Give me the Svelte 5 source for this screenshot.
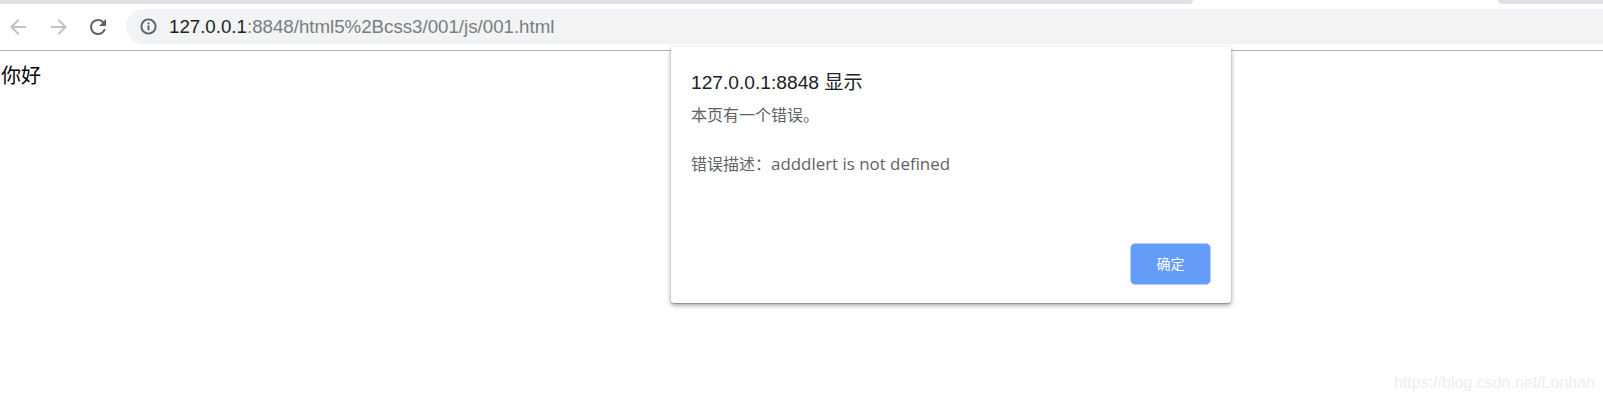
<script>
  const host = '127.0.0.1';
  const rest = ':8848/html5%2Bcss3/001/js/001.html';
</script>

<div class="page">
  <div class="tabstrip">
    <div class="tab-bg left"></div>
    <div class="tab-bg right"></div>
  </div>
  <div class="toolbar">
    <svg class="nav first" width="24" height="24" viewBox="0 0 24 24" aria-hidden="true"><path d="M20 11H7.83l5.59-5.59L12 4l-8 8 8 8 1.41-1.41L7.83 13H20z" fill="#c0c2c5"/></svg>
    <svg class="nav" width="24" height="24" viewBox="0 0 24 24" aria-hidden="true"><path d="M4 11h12.17l-5.59-5.59L12 4l8 8-8 8-1.41-1.41L16.17 13H4z" fill="#c0c2c5"/></svg>
    <svg class="nav reload" width="24" height="24" viewBox="0 0 24 24" aria-hidden="true"><path d="M17.65 6.35A7.96 7.96 0 0 0 12 4a8 8 0 1 0 7.73 10h-2.08A6 6 0 1 1 12 6c1.66 0 3.14.69 4.22 1.78L13 11h7V4z" fill="#5f6368"/></svg>
    <div class="omnibox">
      <svg width="17" height="17" viewBox="0 0 16 16" aria-hidden="true"><circle cx="8" cy="8" r="6.7" fill="none" stroke="#5f6368" stroke-width="1.8"/><rect x="7.1" y="7" width="1.8" height="4.6" fill="#5f6368"/><rect x="7.1" y="4.2" width="1.8" height="1.8" fill="#5f6368"/></svg>
      <span class="url"><span class="host">{host}</span>{rest}</span>
    </div>
  </div>
  <main class="content">你好</main>

  <div class="dialog" role="alertdialog">
    <h2>127.0.0.1:8848 显示</h2>
    <p class="first-line">本页有一个错误。</p>
    <p class="second-line">错误描述：<span class="latin">adddlert is not defined</span></p>
    <div class="actions"><button>确定</button></div>
  </div>

  <div class="watermark">https://blog.csdn.net/Lonhan</div>
</div>

<style>
  :global(body) { margin: 0; background: #fff; }
  .page {
    position: relative;
    width: 1603px;
    height: 401px;
    overflow: hidden;
    font-family: "Open Sans", "Noto Sans CJK SC", sans-serif;
    background: #fff;
  }
  .tabstrip { display: flex; justify-content: space-between; height: 4px; background: #fff; }
  .tab-bg { height: 4px; background: #dee1e6; }
  .tab-bg.left { width: 1193px; border-bottom-right-radius: 4px; }
  .tab-bg.right { width: 105px; border-bottom-left-radius: 4px; }
  .toolbar {
    display: flex;
    align-items: center;
    height: 47px;
    box-sizing: border-box;
    padding-bottom: 1px;
    border-bottom: 1px solid #b2b2b2;
  }
  .nav { flex: none; margin-left: 17px; }
  .nav.first { margin-left: 6px; }
  .nav.reload { margin-left: 15px; }
  .omnibox {
    display: flex;
    align-items: center;
    gap: 12px;
    flex: 1;
    height: 35px;
    margin-left: 16px;
    padding-left: 14px;
    background: #f1f3f4;
    border-radius: 18px 0 0 18px;
  }
  .url { font-family: "Liberation Sans", sans-serif; font-size: 18.7px; color: #7a7d81; white-space: nowrap; }
  .host { color: #202124; }
  .content { padding: 12px 0 0 1px; font-size: 20px; line-height: 26px; color: #000; }
  .dialog {
    position: absolute;
    left: 671px;
    top: 47px;
    width: 560px;
    height: 256px;
    box-sizing: border-box;
    padding: 24px 20px 18px;
    display: flex;
    flex-direction: column;
    background: #fff;
    border-radius: 3px;
    box-shadow: 0 1px 1px rgba(0,0,0,.22), 0 2px 5px rgba(0,0,0,.4);
  }
  h2 { margin: 0; font-family: "Liberation Sans", "Noto Sans CJK SC", sans-serif; font-size: 19.2px; font-weight: 400; line-height: 24px; color: #202124; }
  p { margin: 0; font-size: 16px; line-height: 22px; color: #5f6368; white-space: nowrap; }
  .latin { font-size: 16.9px; }
  .first-line { margin-top: 9px; }
  .second-line { margin-top: 27px; }
  .actions { margin-top: auto; display: flex; justify-content: flex-end; }
  button {
    width: 81px;
    height: 42px;
    padding: 0 0 2px;
    font: 14px "Liberation Sans", "Noto Sans CJK SC", sans-serif;
    color: #fff;
    background: #659cfa;
    border: 1px solid #b5cffb;
    border-radius: 5px;
  }
  .watermark {
    position: absolute;
    right: 8px;
    bottom: 9px;
    font-family: "Liberation Sans", sans-serif;
    font-size: 16px;
    color: #eeeeee;
  }
</style>
